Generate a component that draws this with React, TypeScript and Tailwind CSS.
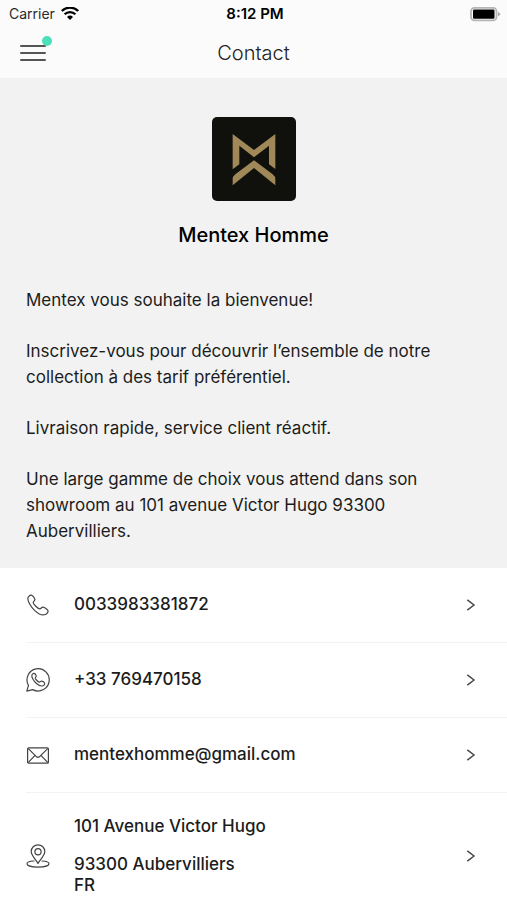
import React from 'react';

const iconProps = {
  viewBox: '0 0 24 24',
  fill: 'none',
  stroke: 'currentColor',
  strokeLinecap: 'round' as const,
  strokeLinejoin: 'round' as const,
  'aria-hidden': true,
};

const handset =
  'M2.2 4.3C3 3 4.3 1.9 5.4 2.2C6.8 2.6 8.6 5 8.9 6.4C9.1 7.8 7.1 8.4 7.2 9.6C7.5 11.4 11.6 15.4 13.7 15.8C15 16 15.6 14 17 14.2C18.5 14.4 21.4 16.3 22 17.7C22.4 18.9 20.8 20.9 19.4 21.5C16.8 22.6 12.4 20.9 8.8 17.6C5 14.2 0.7 7.4 2.2 4.3Z';

const PhoneIcon = () => (
  <svg {...iconProps} strokeWidth={1.2} className="size-6">
    <path d={handset} />
  </svg>
);

const WhatsAppIcon = () => (
  <svg {...iconProps} strokeWidth={1.2} className="size-6">
    <path d="M0.8 23.2L2.5 17.4A11.1 11.1 0 1 1 6.8 21.6Z" />
    <path d={handset} transform="translate(4.6 4) scale(0.64)" strokeWidth={1.8} />
  </svg>
);

const MailIcon = () => (
  <svg {...iconProps} strokeWidth={1.2} className="size-6">
    <rect x="1.6" y="4.8" width="20.8" height="15.4" rx="1" />
    <path d="M2.6 5.8L10.6 13.8Q12 15 13.4 13.8L21.4 5.8M2.6 19.2L8.6 12.8M21.4 19.2L15.4 12.8" />
  </svg>
);

const PinIcon = () => (
  <svg {...iconProps} strokeWidth={1.2} className="size-6">
    <path d="M12 19.4C10.2 16.2 5.2 11.6 5.2 7.6A6.8 6.8 0 0 1 18.8 7.6C18.8 11.6 13.8 16.2 12 19.4Z" />
    <circle cx="12" cy="7.8" r="3.1" />
    <path d="M8 17C3.6 17.2 1 18.3 1 19.8C1 21.7 5.8 23.1 12 23.1S23 21.7 23 19.8C23 18.3 20.4 17.2 16 17" />
  </svg>
);

const ChevronIcon = () => (
  <svg
    viewBox="0 0 10 14"
    fill="none"
    stroke="#4a4a4a"
    strokeWidth={1.5}
    className="h-3.5 w-2.5 shrink-0"
    aria-hidden
  >
    <path d="M1.3 1.8L8 7L1.3 12.2" />
  </svg>
);

const WifiIcon = () => (
  <svg viewBox="0 0 18 14" fill="none" stroke="#000" strokeWidth={2.3} className="h-3.5 w-[18px]" aria-label="Wi-Fi">
    <path d="M0.8 4A11.7 11.7 0 0 1 17.2 4" />
    <path d="M3.6 7.3A7.7 7.7 0 0 1 14.4 7.3" />
    <path d="M9 13L6 10A4.3 4.3 0 0 1 12 10Z" fill="#000" stroke="none" />
  </svg>
);

const BatteryIcon = () => (
  <svg viewBox="0 0 31 15" className="h-[15px] w-[31px]" aria-label="Battery">
    <rect x="1" y="0.9" width="25.5" height="12.5" rx="3.5" fill="#fff" stroke="#b5b5b5" strokeWidth="1.8" />
    <rect x="3" y="2.5" width="21.5" height="9.2" rx="1.2" fill="#000" />
    <path d="M28 4.8L30.6 7.2L28 9.6Z" fill="#a8a8a8" />
  </svg>
);

const Logo = () => (
  <svg viewBox="36 36 252 252" className="size-[84px]" role="img" aria-label="Mentex Homme">
    <rect x="36" y="36" width="252" height="252" rx="15" fill="#10110d" />
    <g fill="#a08858">
      <path d="M98 87L162 135L226 87V192L207 178V122L162 157L118 122V178L98 193Z" />
      <path d="M162 166L218 208Q226 214 226 223V241L162 189L98 241V223Q98 214 106 208Z" />
    </g>
  </svg>
);

const paragraphs = [
  'Mentex vous souhaite la bienvenue!',
  'Inscrivez-vous pour découvrir l’ensemble de notre collection à des tarif préférentiel.',
  'Livraison rapide, service client réactif.',
  'Une large gamme de choix vous attend dans son showroom au 101 avenue Victor Hugo 93300 Aubervilliers.',
];

const contacts = [
  { icon: <PhoneIcon />, label: '0033983381872', href: 'tel:0033983381872' },
  { icon: <WhatsAppIcon />, label: '+33 769470158', href: 'https://wa.me/33769470158' },
  { icon: <MailIcon />, label: 'mentexhomme@gmail.com', href: 'mailto:mentexhomme@gmail.com' },
];

const App = () => {
  return (
    <div className="min-h-screen w-full bg-white font-['Inter',sans-serif] text-[#1c1c1c]">
      <header className="bg-[#fbfbfb]">
        <div className="grid grid-cols-3 items-center h-7 pl-[9px] pr-1.5 text-sm text-black">
          <div className="flex items-center gap-1.5 text-[#2a2a2a]">
            <span>Carrier</span>
            <WifiIcon />
          </div>
          <time className="text-center text-[15px] font-semibold">8:12 PM</time>
          <div className="flex justify-end">
            <BatteryIcon />
          </div>
        </div>
        <div className="grid grid-cols-3 items-center h-[50px] px-5">
          <button type="button" aria-label="Menu" className="relative w-[26px] py-4">
            <span className="flex flex-col gap-[5px]">
              <span className="h-0.5 rounded-full bg-[#555]" />
              <span className="h-0.5 rounded-full bg-[#555]" />
              <span className="h-0.5 rounded-full bg-[#555]" />
            </span>
            <span className="absolute -right-1.5 top-[7px] size-2.5 rounded-full bg-[#4ddfb8]" />
          </button>
          <h1 className="text-center text-xl font-light text-[#222]">Contact</h1>
        </div>
      </header>

      <main>
        <section className="bg-[#f2f2f2] px-[26px] pt-[39px] pb-6">
          <div className="flex flex-col items-center gap-5">
            <Logo />
            <h2 className="text-xl leading-7 font-medium text-black">Mentex Homme</h2>
          </div>
          <div className="mt-[38px] flex flex-col gap-[25px] max-w-[420px] text-[17px] leading-[26px]">
            {paragraphs.map((text) => (
              <p key={text}>{text}</p>
            ))}
          </div>
        </section>

        <ul className="pl-[26px] text-[17px] font-medium">
          {contacts.map((item) => (
            <li key={item.href} className="border-b border-[#f3f3f3]">
              <a href={item.href} className="flex items-center h-[74px] pr-[31px]">
                <span className="w-12 shrink-0 text-[#444]">{item.icon}</span>
                <span className="flex-1">{item.label}</span>
                <ChevronIcon />
              </a>
            </li>
          ))}
          <li>
            <a href="#map" className="flex items-center pt-[23px] pb-1 pr-[31px] leading-[21px]">
              <span className="w-12 shrink-0 text-[#444]">
                <PinIcon />
              </span>
              <address className="flex-1 not-italic">
                <p className="mb-[17px]">101 Avenue Victor Hugo</p>
                <p>93300 Aubervilliers</p>
                <p>FR</p>
              </address>
              <ChevronIcon />
            </a>
          </li>
        </ul>
      </main>
    </div>
  );
};

export default App;
